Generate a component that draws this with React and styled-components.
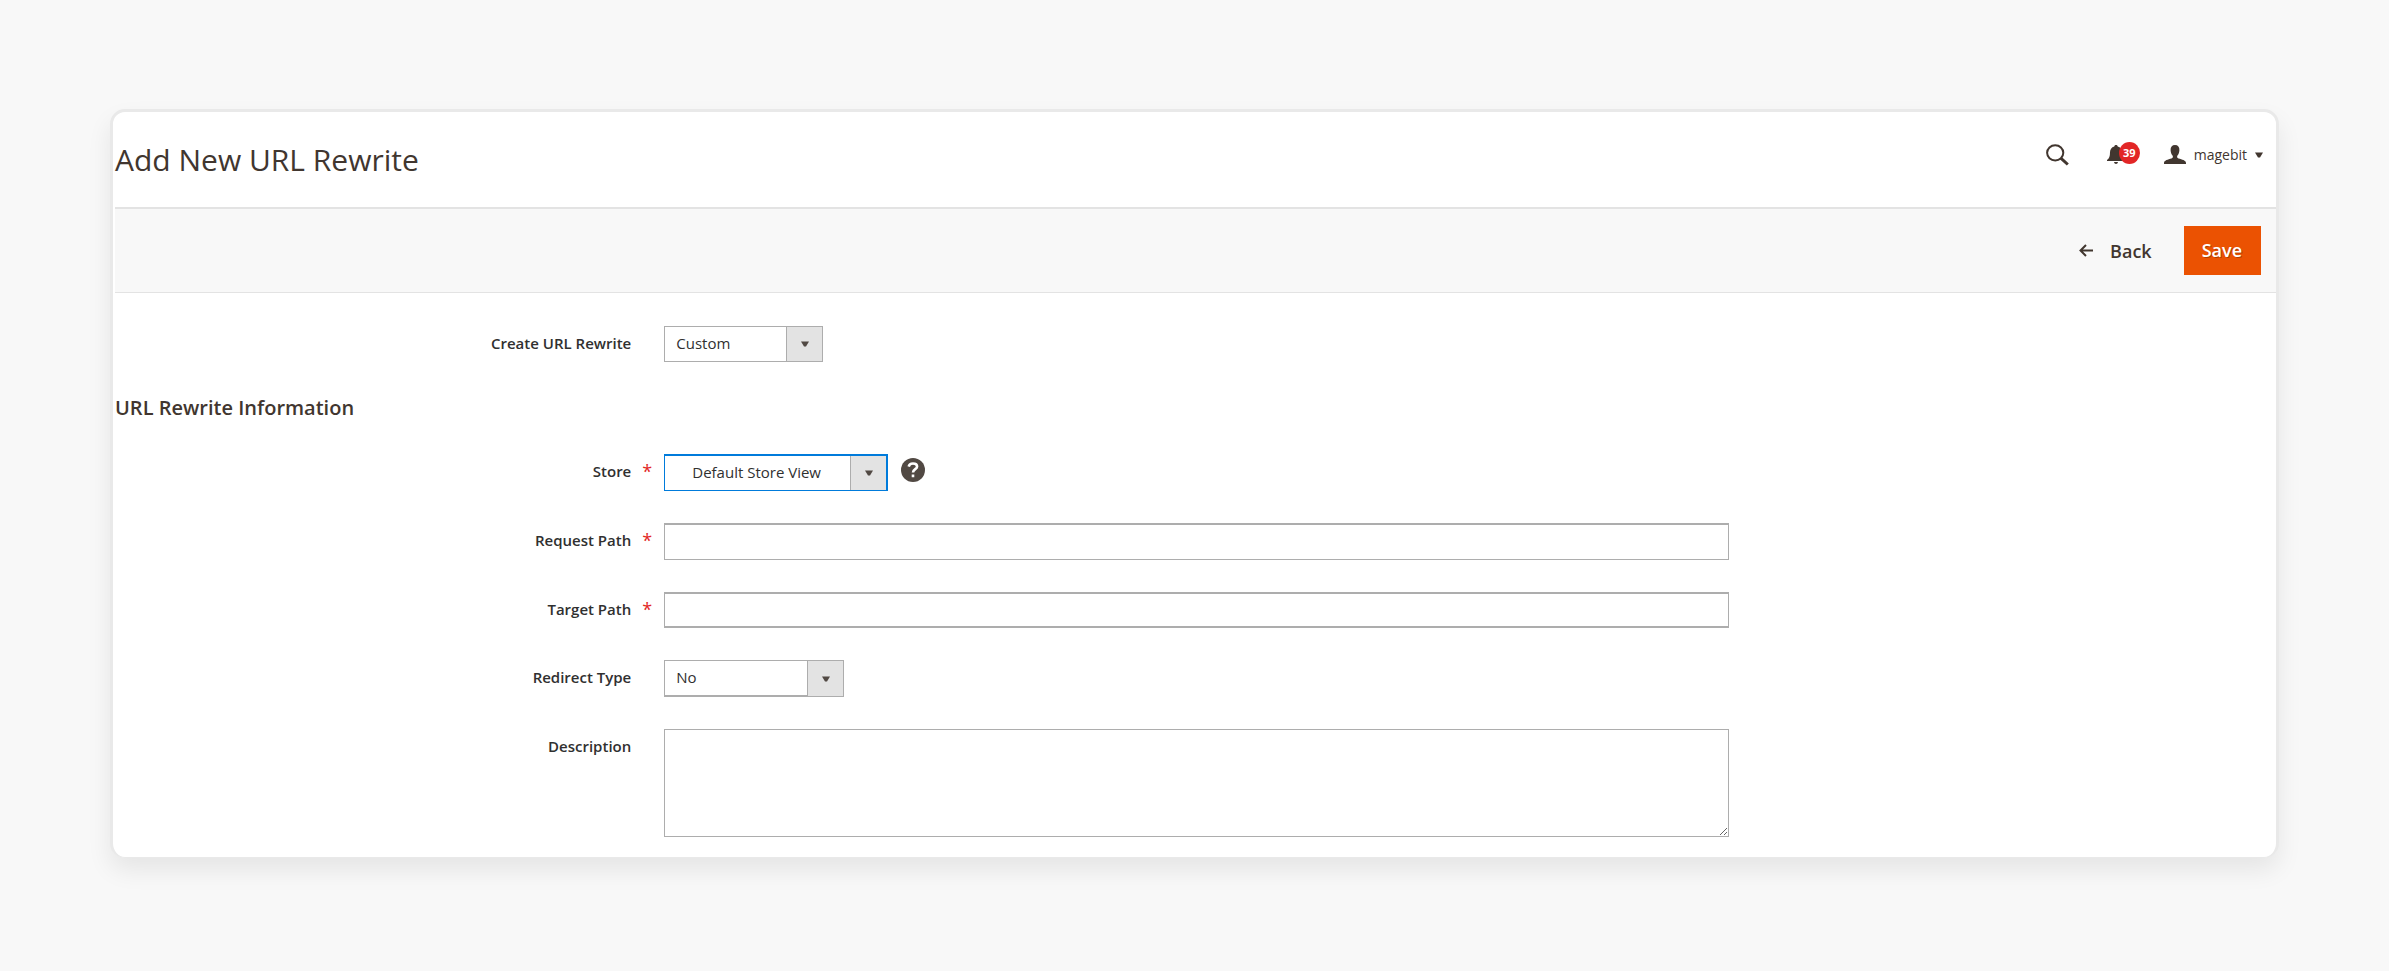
import React from "react";
import styled, { createGlobalStyle } from "styled-components";

const GlobalStyle = createGlobalStyle`
  *, *::before, *::after { box-sizing: border-box; }
  body {
    margin: 0;
    background: #f8f8f8;
    color: #41362f;
    font-family: "Open Sans", "Noto Sans", sans-serif;
    font-size: 15px;
  }
  button, input, select, textarea { font: inherit; }
`;

const Page = styled.div`
  min-height: 100vh;
  padding: 109px 110px 112px;
`;

const Card = styled.main`
  background: #fff;
  border: solid #e9e9e9;
  border-width: 3px 3px 1px;
  border-radius: 15px;
  box-shadow: 0 12px 24px rgba(0, 0, 0, 0.08);
  padding: 0 0 20px 2px;
`;

const Header = styled.header`
  display: flex;
  align-items: center;
  justify-content: space-between;
  height: 97px;
  border-bottom: 2px solid #e3e3e3;
`;

const Title = styled.h1`
  margin: 0;
  font-size: 30px;
  line-height: 40px;
  font-weight: 400;
`;

const HeaderTools = styled.div`
  display: flex;
  align-items: center;
  height: 24px;
  margin-bottom: 10px;
  padding-right: 13px;
`;

const IconButton = styled.button`
  display: flex;
  align-items: center;
  position: relative;
  height: 24px;
  margin: 0 ${(p) => p.$after}px 0 0;
  padding: 0;
  border: 0;
  background: none;
  color: #41362f;
`;

const Badge = styled.span`
  position: absolute;
  left: 12px;
  top: -1px;
  width: 21px;
  height: 22px;
  border-radius: 50%;
  background: #e22626;
  color: #fff;
  font-size: 11px;
  line-height: 22px;
  font-weight: 700;
  text-align: center;
`;

const UserMenu = styled.button`
  display: flex;
  align-items: center;
  gap: 8px;
  padding: 0;
  border: 0;
  background: none;
  color: #41362f;
  font-size: 14px;
  line-height: 24px;
`;

const Toolbar = styled.div`
  display: flex;
  align-items: center;
  justify-content: flex-end;
  gap: 32px;
  height: 84px;
  padding-right: 15px;
  background: #f8f8f8;
  border-bottom: 1px solid #e3e3e3;
`;

const BackButton = styled.button`
  display: flex;
  align-items: center;
  gap: 16px;
  padding: 0;
  border: 0;
  background: none;
  color: #41362f;
  font-size: 18px;
  line-height: 24px;
  font-weight: 600;
`;

const SaveButton = styled.button`
  height: 49px;
  padding: 0 19px 1px 18px;
  border: 0;
  background: #eb5202;
  color: #fff;
  font-size: 18px;
  line-height: 24px;
  font-weight: 600;
  text-shadow: 1px 1px 0 rgba(0, 0, 0, 0.25);
`;

const Form = styled.form`
  display: flex;
  flex-direction: column;
  padding-top: 33px;
`;

const Fieldset = styled.section`
  display: flex;
  flex-direction: column;
  gap: 32px;
`;

const SectionTitle = styled.h2`
  margin: 33px 0 1px;
  font-size: 20px;
  line-height: 26px;
  font-weight: 600;
`;

const Row = styled.div`
  display: grid;
  grid-template-columns: calc(25% + 9px) calc(50% - 16px);
  align-items: start;
`;

const Label = styled.label`
  display: flex;
  justify-content: flex-end;
  color: #303030;
  line-height: 34px;
  font-weight: 600;
`;

const Mark = styled.span`
  width: 33px;
  padding-left: 11px;
  color: #e22626;
  font-size: 18px;
  font-weight: 400;
`;

const Control = styled.div`
  display: flex;
  align-items: center;
  gap: 13px;
`;

const TextInput = styled.input`
  display: block;
  width: 100%;
  height: ${(p) => p.$height}px;
  padding: 0 11px;
  border: solid #adadad;
  border-width: ${(p) => p.$edges};
  border-radius: 0;
  background: #fff;
  color: #303030;
`;

const TextArea = styled.textarea`
  display: block;
  width: 100%;
  height: 108px;
  padding: 8px 11px;
  border: 1px solid #adadad;
  border-radius: 0;
  background: #fff;
  color: #303030;
  resize: both;
`;

const SelectBox = styled.div`
  position: relative;
  width: ${(p) => p.$width}px;
  height: ${(p) => p.$height}px;
`;

const SelectField = styled.select`
  appearance: none;
  width: 100%;
  height: 100%;
  padding: 0 38px 2px ${(p) => p.$indent}px;
  border: solid ${(p) => (p.$active ? "#007bdb" : "#adadad")};
  border-width: ${(p) => p.$edges};
  border-radius: 0;
  outline: 0;
  background: #fff;
  color: #303030;
`;

const SelectArrow = styled.span`
  position: absolute;
  top: ${(p) => (p.$active ? 2 : 1)}px;
  right: ${(p) => (p.$active ? 2 : 1)}px;
  bottom: 1px;
  width: 36px;
  display: flex;
  align-items: center;
  justify-content: center;
  border-left: 1px solid #adadad;
  background: #e3e3e3;
  color: #514943;
  pointer-events: none;
`;

const HelpButton = styled.button`
  display: flex;
  width: 24px;
  height: 24px;
  margin-bottom: 6px;
  align-items: center;
  justify-content: center;
  padding: 0;
  border: 0;
  border-radius: 50%;
  background: #514943;
`;

const Caret = () => (
  <svg width="8" height="6" viewBox="0 0 8 6" fill="currentColor" aria-hidden="true">
    <path d="M0 0.500h8L5 5.500H3z" />
  </svg>
);

const SearchIcon = () => (
  <svg width="23" height="22" viewBox="0 0 23 22" fill="none" stroke="currentColor" aria-hidden="true">
    <ellipse cx="9.2" cy="8.8" rx="8.1" ry="7.6" strokeWidth="2" />
    <path d="M14.8 14.2l7 6.3" strokeWidth="3" />
  </svg>
);

const BellIcon = () => (
  <svg width="18" height="19" viewBox="0 0 18 19" fill="currentColor" aria-hidden="true">
    <path d="M9 0c1 0 1.600.6 1.700 1.400C13.600 2.200 15 4.500 15 7.300c0 4 .7 6.200 3 7.700v1H0v-1c2.300-1.500 3-3.700 3-7.700 0-2.800 1.400-5.100 4.300-5.900C7.400.6 8 0 9 0zM7 17h4c-.2 1.200-1 2-2 2s-1.800-.8-2-2z" />
  </svg>
);

const UserIcon = () => (
  <svg width="22" height="20" viewBox="0 0 22 20" fill="currentColor" aria-hidden="true">
    <path d="M11 0c3 0 4.600 2 4.400 5.200-.2 2.500-.9 4.400-2.100 5.500-.5 1.600 0 2.300 1.200 2.700 3.500 1 7.500 1.700 7.500 4.600v1H0v-1c0-2.900 4-3.600 7.500-4.600 1.200-.4 1.700-1.100 1.200-2.700-1.200-1.100-1.900-3-2.100-5.500C6.400 2 8 0 11 0z" />
  </svg>
);

const ArrowLeft = () => (
  <svg width="15" height="13" viewBox="0 0 15 13" fill="none" stroke="currentColor" strokeWidth="2" aria-hidden="true">
    <path d="M1.500 6.500H14M7 1L1.500 6.500L7 12" />
  </svg>
);

const QuestionMark = () => (
  <svg width="12" height="16" viewBox="0 0 12 16" fill="none" stroke="#fff" strokeWidth="2.600" aria-hidden="true">
    <path d="M1.700 4.600C2.200 2.300 3.800 1.500 6 1.500c2.400 0 4.100 1.100 4.100 3 0 2.700-4.100 2.600-4.100 6M6 12.400v2.800" />
  </svg>
);

function Field({ id, label, required, children }) {
  return (
    <Row>
      <Label htmlFor={id}>
        {label}
        <Mark>{required ? "*" : ""}</Mark>
      </Label>
      <Control>{children}</Control>
    </Row>
  );
}

function Select({ id, width, height = 36, edges = "1px", indent = 11, active, options }) {
  return (
    <SelectBox $width={width} $height={height}>
      <SelectField id={id} $edges={edges} $indent={indent} $active={active}>
        {options.map((o) => (
          <option key={o}>{o}</option>
        ))}
      </SelectField>
      <SelectArrow $active={active}>
        <Caret />
      </SelectArrow>
    </SelectBox>
  );
}

export default function App() {
  return (
    <>
      <GlobalStyle />
      <Page>
        <Card>
          <Header>
            <Title>Add New URL Rewrite</Title>
            <HeaderTools>
              <IconButton type="button" aria-label="Search" $after={38}>
                <SearchIcon />
              </IconButton>
              <IconButton type="button" aria-label="Notifications" $after={39}>
                <BellIcon />
                <Badge>39</Badge>
              </IconButton>
              <UserMenu type="button">
                <UserIcon />
                magebit
                <Caret />
              </UserMenu>
            </HeaderTools>
          </Header>
          <Toolbar>
            <BackButton type="button">
              <ArrowLeft />
              Back
            </BackButton>
            <SaveButton type="submit" form="rewrite-form">Save</SaveButton>
          </Toolbar>
          <Form id="rewrite-form" onSubmit={(e) => e.preventDefault()}>
            <Field id="rewrite-kind" label="Create URL Rewrite">
              <Select id="rewrite-kind" width={159} options={["Custom"]} />
            </Field>
            <Fieldset>
              <SectionTitle>URL Rewrite Information</SectionTitle>
              <Field id="store" label="Store" required>
                <Select
                  id="store"
                  width={224}
                  height={37}
                  edges="2px 2px 1px 1px"
                  indent={27}
                  active
                  options={["Default Store View"]}
                />
                <HelpButton type="button" aria-label="Help">
                  <QuestionMark />
                </HelpButton>
              </Field>
              <Field id="request-path" label="Request Path" required>
                <TextInput id="request-path" type="text" $height={37} $edges="2px 1px 1px" />
              </Field>
              <Field id="target-path" label="Target Path" required>
                <TextInput id="target-path" type="text" $height={36} $edges="2px 1px" />
              </Field>
              <Field id="redirect-type" label="Redirect Type">
                <Select id="redirect-type" width={180} height={37} edges="1px 1px 2px" options={["No"]} />
              </Field>
              <Field id="description" label="Description">
                <TextArea id="description" />
              </Field>
            </Fieldset>
          </Form>
        </Card>
      </Page>
    </>
  );
}
